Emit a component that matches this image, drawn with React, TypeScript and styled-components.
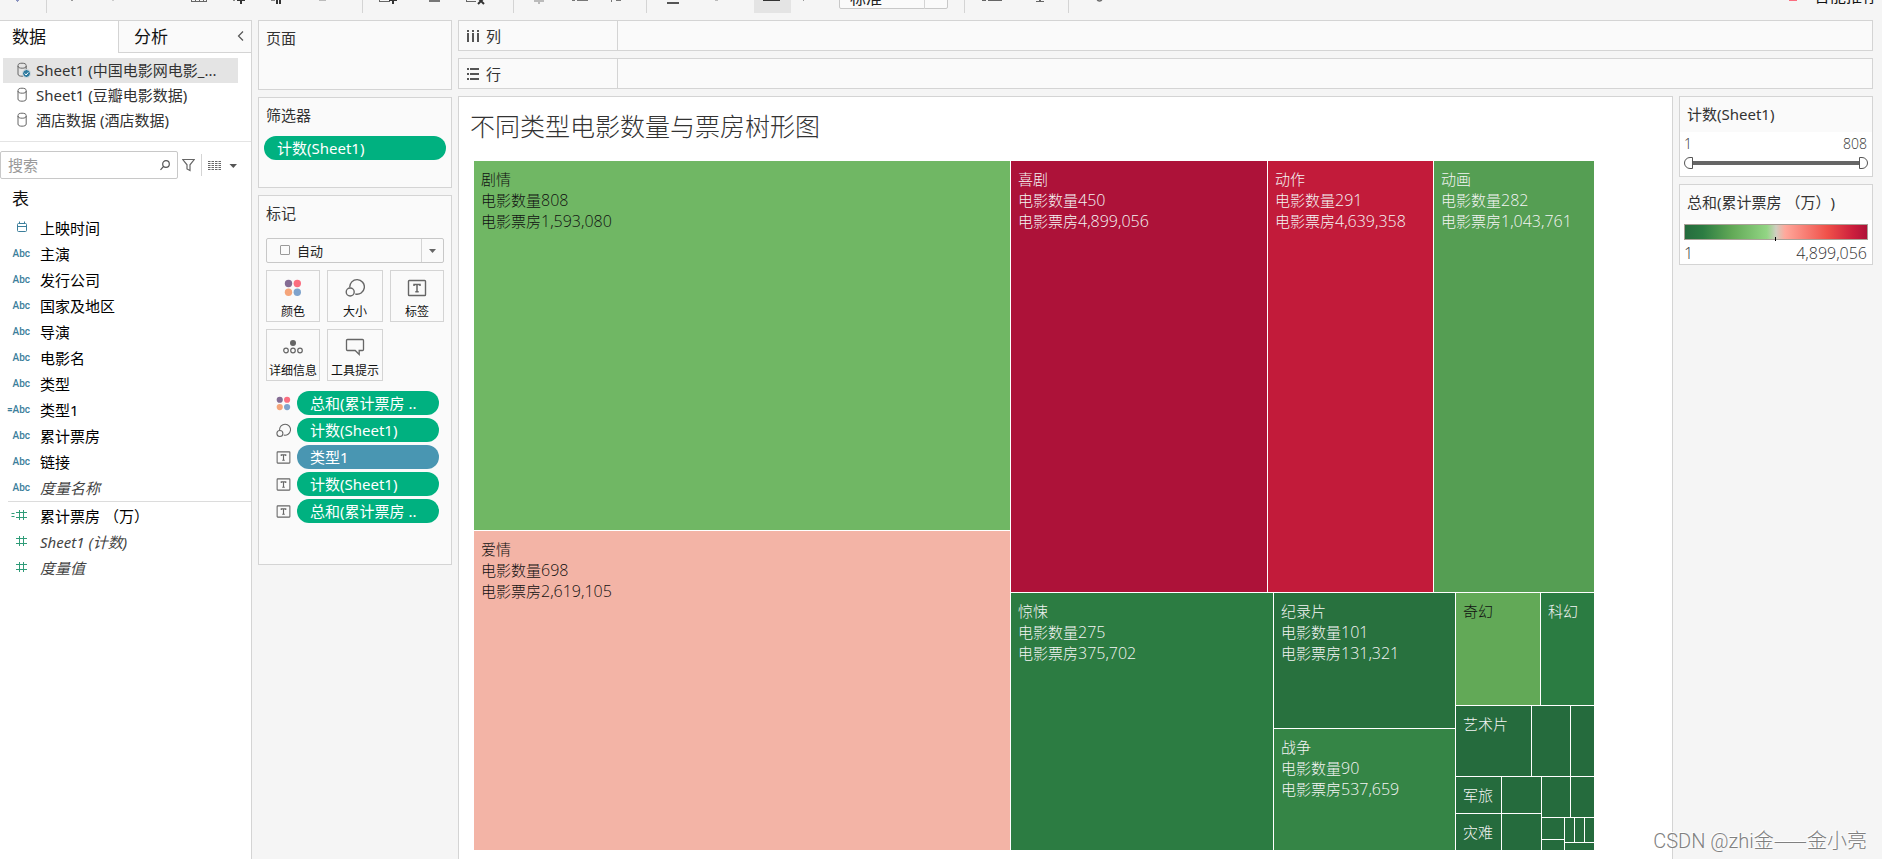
import React from "react";
import styled, { createGlobalStyle } from "styled-components";

const GlobalStyle = createGlobalStyle`
  * { box-sizing: border-box; }
  html, body { margin: 0; padding: 0; }
  body {
    background: #f5f5f5;
    color: #333;
    font-family: "Noto Sans", "Noto Sans CJK SC", sans-serif;
    font-size: 15px;
    text-spacing-trim: space-all;
    overflow: hidden;
  }
  button, input, select { font: inherit; color: inherit; margin: 0; }
  ul { list-style: none; margin: 0; padding: 0; }
  h1, h2 { margin: 0; font-weight: 400; }
  svg { display: block; flex: none; }
`;

const LINE = "#d4d4d4";
const GREEN = "#00b180";
const BLUE = "#4996b2";

const Page = styled.div`
  position: relative;
  height: 100vh;
  display: flex;
  flex-direction: column;
`;

/* ---------- toolbar ---------- */

const Toolbar = styled.header`
  flex: none;
  height: 20px;
  padding-bottom: 7px;
  overflow: hidden;
  display: flex;
  align-items: flex-end;
`;

const ToolGroup = styled.div<{ $width: number; $pad?: number; $last?: boolean }>`
  flex: none;
  width: ${(p) => p.$width}px;
  height: 36px;
  padding-left: ${(p) => p.$pad ?? 4}px;
  border-right: ${(p) => (p.$last ? "none" : `1px solid ${LINE}`)};
  display: flex;
  align-items: flex-end;
`;

const ToolButton = styled.button<{ $width?: number; $active?: boolean }>`
  flex: none;
  width: ${(p) => p.$width ?? 41}px;
  height: 36px;
  padding: 0;
  border: 0;
  background: ${(p) => (p.$active ? "#e4e4e4" : "transparent")};
`;

const ToolSelect = styled.div`
  padding-bottom: 4px;
`;

const Recommend = styled.button`
  margin-left: auto;
  margin-right: 4px;
  padding: 0;
  border: 0;
  background: none;
  height: 36px;
  font-size: 16px;
  line-height: 24px;
  color: #111;
  display: flex;
  align-items: flex-end;
  gap: 9px;
`;

const RecommendText = styled.span`
  padding-bottom: 5px;
`;

function ToolIcon({ w = 41, children }: { w?: number; children?: React.ReactNode }) {
  return (
    <svg width={w} height={36} viewBox={`0 -23 ${w} 36`} shapeRendering="crispEdges">
      {children}
    </svg>
  );
}

/* ---------- select ---------- */

const SelectBox = styled.div<{ $width: number; $arrow: number }>`
  position: relative;
  flex: none;
  width: ${(p) => p.$width}px;
  height: 25px;
  border: 1px solid #c8c8c8;
  border-radius: 2px;
  background: #fafafa;
  display: grid;
  grid-template-columns: 1fr ${(p) => p.$arrow}px;
`;

const Select = styled.select<{ $indent: number; $size: number; $top?: number }>`
  grid-area: 1 / 1 / 2 / 3;
  appearance: none;
  width: 100%;
  border: 0;
  padding: ${(p) => p.$top ?? 0}px 0 0 ${(p) => p.$indent}px;
  background: transparent;
  font-size: ${(p) => p.$size}px;
  color: #222;
`;

const SelectArrow = styled.span`
  grid-area: 1 / 2;
  border-left: 1px solid ${LINE};
  display: flex;
  align-items: center;
  justify-content: center;
  pointer-events: none;
`;

const SelectMark = styled.span`
  position: absolute;
  left: 13px;
  top: 6px;
  width: 10px;
  height: 10px;
  border: 1px solid #999;
  border-radius: 1px;
  pointer-events: none;
`;

const Caret = () => (
  <svg width="7" height="4" viewBox="0 0 7 4">
    <path d="M0 0h7L3.500 4z" fill="#666" />
  </svg>
);

/* ---------- layout ---------- */

const Body = styled.div`
  flex: 1;
  min-height: 0;
  display: flex;
  gap: 6px;
`;

const Side = styled.aside`
  flex: none;
  width: 252px;
  background: #fff;
  border-top: 1px solid ${LINE};
  border-right: 1px solid ${LINE};
  display: flex;
  flex-direction: column;
`;

const Tabs = styled.div`
  display: flex;
  height: 32px;
`;

const Tab = styled.button<{ $active?: boolean; $width?: number }>`
  ${(p) => (p.$width ? `width: ${p.$width}px;` : "flex: 1;")}
  padding: 0 5px 0 ${(p) => (p.$active ? 12 : 15)}px;
  border: 0;
  border-left: ${(p) => (p.$active ? 0 : 1)}px solid ${LINE};
  border-bottom: ${(p) => (p.$active ? 0 : 1)}px solid ${LINE};
  background: ${(p) => (p.$active ? "#fff" : "#fafafa")};
  font-size: 17px;
  line-height: 30px;
  color: #111;
  display: flex;
  align-items: center;
  justify-content: space-between;
`;

const Sources = styled.ul`
  padding: 5px 13px 8px 3px;
  border-bottom: 1px solid #e4e4e4;
`;

const Source = styled.li<{ $active?: boolean }>`
  height: 25px;
  padding: 0 0 2px 14px;
  background: ${(p) => (p.$active ? "#e4e4e4" : "transparent")};
  display: flex;
  align-items: center;
  gap: 5px;
  white-space: nowrap;
`;

const SearchRow = styled.div`
  margin-top: 9px;
  display: flex;
  align-items: center;
`;

const SearchBox = styled.label`
  width: 178px;
  height: 28px;
  padding: 0 7px;
  border: 1px solid #c8c8c8;
  border-radius: 2px;
  display: flex;
  align-items: center;
`;

const SearchInput = styled.input`
  flex: 1;
  min-width: 0;
  padding: 0;
  border: 0;
  outline: 0;
  background: none;
  &::placeholder { color: #999; opacity: 1; }
`;

const IconButton = styled.button<{ $left: number }>`
  padding: 0;
  margin-left: ${(p) => p.$left}px;
  border: 0;
  background: none;
`;

const SearchDivider = styled.span`
  width: 1px;
  height: 22px;
  margin-left: 6px;
  background: ${LINE};
`;

const TableTitle = styled.h2`
  padding: 6px 0 2px 12px;
  font-size: 17px;
  line-height: 28px;
  color: #111;
`;

const Fields = styled.ul<{ $measures?: boolean }>`
  margin-left: ${(p) => (p.$measures ? 8 : 0)}px;
  padding-top: ${(p) => (p.$measures ? 2 : 0)}px;
  border-top: ${(p) => (p.$measures ? 1 : 0)}px solid #dcdcdc;
`;

const Field = styled.li<{ $italic?: boolean; $measures?: boolean }>`
  height: 26px;
  padding-bottom: ${(p) => (p.$measures ? 4 : 2)}px;
  color: ${(p) => (p.$italic ? "#444" : "#000")};
  font-style: ${(p) => (p.$italic ? "italic" : "normal")};
  display: grid;
  grid-template-columns: ${(p) => (p.$measures ? 22 : 30)}px 1fr;
  column-gap: 10px;
  align-items: center;
`;

const FieldType = styled.span`
  justify-self: end;
  color: #3b7e9b;
  font-family: Roboto, sans-serif;
  font-size: 10px;
  font-weight: 500;
  font-style: normal;
`;

const CalendarIconBox = styled.span`
  display: block;
  padding-right: 2px;
`;

const HashBox = styled.span`
  display: block;
  justify-self: end;
  padding-right: 3px;
`;

const Column = styled.div`
  flex: none;
  width: 194px;
  display: flex;
  flex-direction: column;
  gap: 7px;
`;

const Panel = styled.section<{ $height: number }>`
  height: ${(p) => p.$height}px;
  border: 1px solid ${LINE};
  background: #fafafa;
`;

const PanelTitle = styled.h2`
  height: 36px;
  padding-left: 7px;
  font-size: 15px;
  line-height: 34px;
`;

const Pill = styled.button<{ $color: string; $width: number }>`
  width: ${(p) => p.$width}px;
  height: 24px;
  padding: 0 13px;
  border: 0;
  border-radius: 12px;
  background: ${(p) => p.$color};
  color: #fff;
  line-height: 24px;
  text-align: left;
  white-space: nowrap;
`;

const FilterShelf = styled.div`
  padding: 2px 5px;
`;

const MarksBody = styled.div`
  padding: 6px 7px;
`;

const CardGrid = styled.div`
  margin-top: 7px;
  display: grid;
  grid-template-columns: 54px 56px 54px;
  grid-auto-rows: 52px;
  gap: 7px;
`;

const Card = styled.button`
  padding: 6px 0 0;
  border: 1px solid ${LINE};
  background: #fafafa;
  font-size: 12px;
  line-height: 18px;
  color: #111;
  display: flex;
  flex-direction: column;
  align-items: center;
  gap: 4px;
  white-space: nowrap;
`;

const IconSlot = styled.span`
  height: 22px;
  display: flex;
  align-items: center;
`;

const MarkList = styled.ul`
  margin-top: 10px;
  padding-left: 10px;
  display: grid;
  row-gap: 3px;
`;

const MarkItem = styled.li`
  display: flex;
  align-items: center;
  gap: 6px;
`;

const Work = styled.div`
  flex: 1;
  min-width: 0;
  margin-right: 3px;
  display: flex;
  flex-direction: column;
  gap: 7px;
`;

const Shelf = styled.div`
  flex: none;
  height: 31px;
  margin-right: 6px;
  border: 1px solid ${LINE};
  background: #fafafa;
  display: flex;
`;

const ShelfLabel = styled.div`
  width: 159px;
  padding-left: 8px;
  border-right: 1px solid ${LINE};
  display: flex;
  align-items: center;
  gap: 7px;
`;

const Stage = styled.div`
  flex: 1;
  min-height: 0;
  margin-right: 6px;
  display: flex;
  gap: 6px;
`;

const View = styled.main`
  flex: 1;
  min-width: 0;
  border: 1px solid ${LINE};
  border-bottom: 0;
  background: #fff;
  padding: 0 78px 9px 15px;
  display: flex;
  flex-direction: column;
`;

const ViewTitle = styled.h1`
  height: 64px;
  margin-left: -4px;
  padding-top: 10px;
  font-size: 25px;
  line-height: 36px;
  font-family: "Noto Sans CJK SC", sans-serif;
  font-weight: 300;
  color: #333;
`;

/* ---------- treemap ---------- */

const Split = styled.div<{ $dir: "row" | "column"; $size: number }>`
  flex: ${(p) => p.$size} 1 0;
  min-width: 0;
  min-height: 0;
  display: flex;
  flex-direction: ${(p) => p.$dir};
  gap: 1px;
`;

const Tile = styled.div<{ $size: number; $color: string; $dark?: boolean }>`
  flex: ${(p) => p.$size} 1 0;
  min-width: 0;
  min-height: 0;
  overflow: hidden;
  background: ${(p) => p.$color};
  color: ${(p) => (p.$dark ? "#111" : "#f4f4f4")};
`;

const TileText = styled.div`
  padding: 7px 0 0 7px;
  font-family: "Noto Sans CJK SC", sans-serif;
  font-weight: 300;
`;

const TileLine = styled.div`
  height: 21px;
  line-height: 21px;
  white-space: nowrap;
`;

const Num = styled.span<{ $size?: number }>`
  font-family: "Open Sans", "Noto Sans", sans-serif;
  font-weight: 300;
  font-size: ${(p) => p.$size ?? 16}px;
`;

type TileNode = { size: number; color: string; dark?: boolean; lines?: string[] };
type SplitNode = { size: number; dir: "row" | "column"; items: TreeNode[] };
type TreeNode = TileNode | SplitNode;

const D = "#256b3d";
const t = (size: number, color = D, lines?: string[], dark?: boolean): TileNode => ({ size, color, lines, dark });
const row = (size: number, ...items: TreeNode[]): SplitNode => ({ size, dir: "row", items });
const col = (size: number, ...items: TreeNode[]): SplitNode => ({ size, dir: "column", items });

const genre = (name: string, count: string, gross: string) => [name, `电影数量${count}`, `电影票房${gross}`];

const tree = row(
  1,
  col(
    536,
    t(369, "#70b764", genre("剧情", "808", "1,593,080"), true),
    t(319, "#f3b4a6", genre("爱情", "698", "2,619,105"), true)
  ),
  col(
    583,
    row(
      431,
      t(256, "#ad1239", genre("喜剧", "450", "4,899,056")),
      t(165, "#c21b3a", genre("动作", "291", "4,639,358")),
      t(160, "#559e53", genre("动画", "282", "1,043,761"))
    ),
    row(
      257,
      t(262, "#2c7c42", genre("惊悚", "275", "375,702")),
      col(
        181,
        t(135, "#28713e", genre("纪录片", "101", "131,321")),
        t(121, "#358546", genre("战争", "90", "537,659"))
      ),
      col(
        138,
        row(112, t(84, "#62a957", ["奇幻"], true), t(53, "#2b7c42", ["科幻"])),
        row(70, t(75, D, ["艺术片"]), t(38), t(23)),
        row(
          73,
          col(85, row(36, t(45, D, ["军旅"]), t(39)), row(36, t(45, D, ["灾难"]), t(39))),
          col(
            52,
            row(40, t(28), t(23)),
            row(32, col(22, t(21), t(10)), col(29, row(24, t(9), t(9), t(9)), t(7)))
          )
        )
      )
    )
  )
);

function Treemap({ node }: { node: TreeNode }) {
  if ("items" in node) {
    return (
      <Split $dir={node.dir} $size={node.size}>
        {node.items.map((n, i) => (
          <Treemap key={i} node={n} />
        ))}
      </Split>
    );
  }
  return (
    <Tile $size={node.size} $color={node.color} $dark={node.dark}>
      {node.lines && (
        <TileText>
          {node.lines.map((line) => {
            const digits = line.replace(/^[^\d]+/, "");
            return (
              <TileLine key={line}>
                {line.slice(0, line.length - digits.length)}
                {digits && <Num>{digits}</Num>}
              </TileLine>
            );
          })}
        </TileText>
      )}
    </Tile>
  );
}

/* ---------- legends ---------- */

const Legend = styled.section`
  height: 81px;
  border: 1px solid ${LINE};
  background: #fff;
`;

const LegendTitle = styled(PanelTitle)`
  background: #fafafa;
  height: 35px;
  white-space: nowrap;
`;

const Values = styled.div`
  padding: 0 5px 0 4px;
  line-height: 24px;
  display: flex;
  justify-content: space-between;
`;

const RangeBox = styled.div`
  margin: 1px 4px 0;
  display: grid;
  align-items: center;
  background: linear-gradient(#666, #666) center / calc(100% - 8px) 4px no-repeat;
`;

const Range = styled.input<{ $end?: boolean }>`
  grid-area: 1 / 1;
  appearance: none;
  width: 100%;
  height: 12px;
  background: none;
  pointer-events: none;
  &::-webkit-slider-thumb {
    appearance: none;
    box-sizing: border-box;
    pointer-events: auto;
    width: 9px;
    height: 12px;
    border: 1px solid #555;
    background: #fff;
    border-radius: ${(p) => (p.$end ? "0 6px 6px 0" : "6px 0 0 6px")};
  }
`;

const Ramp = styled.svg`
  margin: 4px 4px 0;
  width: calc(100% - 8px);
`;

const Watermark = styled.div`
  position: absolute;
  right: 15px;
  bottom: 4px;
  font-family: Roboto, sans-serif;
  font-weight: 300;
  font-size: 20px;
  line-height: 28px;
  color: #808080;
  text-shadow: -1px -1px 0 #fff;
  white-space: nowrap;
`;

const WatermarkName = styled.span`
  font-family: "Noto Sans CJK SC", sans-serif;
`;

/* ---------- icons ---------- */

const Cylinder = ({ checked }: { checked?: boolean }) => (
  <svg width="14" height="16" viewBox="0 0 14 16" fill="none" stroke="#666">
    <path d="M1 3.500C1 1.900 2.500 1.200 5 1.200s4.200.7 4.200 2.300v8.500c0 1.500-1.700 2.200-4.200 2.200S1 13.500 1 12z" />
    <path d="M1 4c0 1.500 1.600 2.200 4.200 2.200S9.200 5.500 9.200 4" />
    {checked && (
      <>
        <circle cx="9.500" cy="11.500" r="4" fill="#2f7ba0" stroke="#e4e4e4" />
        <path d="M7.700 11.500l1.400 1.500 2.200-2.600" stroke="#fff" />
      </>
    )}
  </svg>
);

const Dots = ({ size }: { size: number }) => (
  <svg width={size} height={size} viewBox="0 0 18 18">
    <circle cx="4.500" cy="4.500" r="3.700" fill="#846c94" />
    <circle cx="13.300" cy="4.500" r="3.700" fill="#fb6e80" />
    <circle cx="4.500" cy="13.300" r="3.700" fill="#f5a57a" />
    <circle cx="13.300" cy="13.300" r="3.700" fill="#7fa3cc" />
  </svg>
);

const SizeIcon = ({ size }: { size: number }) => (
  <svg width={size} height={size} viewBox="0 0 20 20" fill="none" stroke="#666" strokeWidth="1.400">
    <path d="M4.800 9.500A7.300 7.300 0 1 1 10.300 16" />
    <circle cx="5.200" cy="14" r="4" />
  </svg>
);

const TextIcon = ({ size }: { size: number }) => (
  <svg width={size} height={size} viewBox="0 0 20 20" fill="none" stroke="#666">
    <rect x="1.500" y="2.500" width="17" height="15" rx="0.800" strokeWidth="1.400" />
    <path d="M7 8V6.500h6V8M10 6.500v7M8.300 13.700h3.400" strokeWidth="1.500" />
  </svg>
);

const DetailIcon = () => (
  <svg width="20" height="20" viewBox="0 0 20 20" fill="none" stroke="#666" strokeWidth="1.200">
    <circle cx="10" cy="6" r="3" fill="#666" stroke="none" />
    <circle cx="3" cy="13.500" r="2.300" />
    <circle cx="10" cy="13.500" r="2.300" />
    <circle cx="17" cy="13.500" r="2.300" />
  </svg>
);

const TooltipIcon = () => (
  <svg width="20" height="20" viewBox="0 0 20 20" fill="none" stroke="#666" strokeWidth="1.300">
    <path d="M2.500 2.500h15a1 1 0 0 1 1 1v9a1 1 0 0 1-1 1h-3.300v4l-4-4H2.500a1 1 0 0 1-1-1v-9a1 1 0 0 1 1-1z" />
  </svg>
);

const CalendarIcon = () => (
  <svg width="12" height="12" viewBox="0 0 12 12" fill="none" stroke="#3b7e9b">
    <rect x="1.500" y="2.500" width="9" height="8" rx="1" />
    <path d="M1.500 5.500h9M3.500 0.500v2M8.500 0.500v2" />
  </svg>
);

const HashIcon = ({ calc }: { calc?: boolean }) => (
  <svg width="16" height="12" viewBox="0 0 16 12" fill="none" stroke="#2f9c78">
    <path d="M5 3.500h11M5 8.500h11M8.500 1v10M12.500 1v10" />
    {calc && <path d="M0.500 4.500h3M0.500 7.500h3" />}
  </svg>
);

/* ---------- page ---------- */

const dimensions = [
  "主演", "发行公司", "国家及地区", "导演", "电影名", "类型", "类型1", "累计票房", "链接", "度量名称",
];

const marks = [
  { icon: <Dots size={15} />, text: "总和(累计票房 ..", color: GREEN },
  { icon: <SizeIcon size={15} />, text: "计数(Sheet1)", color: GREEN },
  { icon: <TextIcon size={15} />, text: "类型1", color: BLUE },
  { icon: <TextIcon size={15} />, text: "计数(Sheet1)", color: GREEN },
  { icon: <TextIcon size={15} />, text: "总和(累计票房 ..", color: GREEN },
];

export default function App() {
  return (
    <Page>
      <GlobalStyle />
      <Toolbar>
        <ToolGroup $width={47} $pad={0}>
          <ToolButton aria-label="Home"><ToolIcon><path d="M15 -1h5l-2.500 3z" fill="#8a93c0" /></ToolIcon></ToolButton>
        </ToolGroup>
        <ToolGroup $width={316} $pad={5}>
          <ToolButton aria-label="Undo"><ToolIcon><path d="M19 -1h2v2h-2z" fill="#999" /></ToolIcon></ToolButton>
          <ToolButton aria-label="Redo"><ToolIcon><path d="M19 -1h2v2h-2z" fill="#ccc" /></ToolIcon></ToolButton>
          <ToolButton aria-label="Save"><ToolIcon /></ToolButton>
          <ToolButton aria-label="New data source">
            <ToolIcon><path d="M16.500 -2v3.500h15V-2M20.500 -1v2M24.500 -1v2M28.500 -1v2" fill="none" stroke="#666" /></ToolIcon>
          </ToolButton>
          <ToolButton aria-label="Add">
            <ToolIcon>
              <path d="M24 -3h2v7h-2zM21 -1h8v2h-8z" fill="#333" />
              <path d="M17 0h2v1h-2z" fill="#888" />
            </ToolIcon>
          </ToolButton>
          <ToolButton aria-label="Pause updates">
            <ToolIcon>
              <path d="M19 -3h2v7h-2zM22 -3h2v7h-2z" fill="#333" />
              <path d="M14 0h4v1h-4z" fill="#888" />
            </ToolIcon>
          </ToolButton>
          <ToolButton aria-label="Run update"><ToolIcon><path d="M21 -1h7v2h-7z" fill="#bbb" /></ToolIcon></ToolButton>
        </ToolGroup>
        <ToolGroup $width={151} $pad={2}>
          <ToolButton aria-label="New worksheet">
            <ToolIcon>
              <path d="M14.500 -2v3.500h10" fill="none" stroke="#666" />
              <path d="M27 -3h2v7h-2zM24 -1h8v2h-8z" fill="#333" />
            </ToolIcon>
          </ToolButton>
          <ToolButton $width={45} aria-label="Duplicate"><ToolIcon w={45}><path d="M23 0h11v2h-11z" fill="#777" /></ToolIcon></ToolButton>
          <ToolButton $width={45} aria-label="Clear">
            <ToolIcon w={45}>
              <path d="M15.500 -2v3.500h9" fill="none" stroke="#666" />
              <path d="M27 4l6-6M33 4l-6-6" fill="none" stroke="#333" strokeWidth="2" shapeRendering="auto" />
            </ToolIcon>
          </ToolButton>
        </ToolGroup>
        <ToolGroup $width={133}>
          <ToolButton aria-label="Swap"><ToolIcon><path d="M20 -3h2v7h-2zM16 0h10v2h-10z" fill="#bbb" /></ToolIcon></ToolButton>
          <ToolButton aria-label="Sort ascending"><ToolIcon><path d="M13 0h3v1h-3zM18 0h11v1h-11z" fill="#777" /></ToolIcon></ToolButton>
          <ToolButton aria-label="Sort descending"><ToolIcon><path d="M11 -1h1v3h-1zM16 0h5v1h-5z" fill="#777" /></ToolIcon></ToolButton>
        </ToolGroup>
        <ToolGroup $width={318} $pad={6}>
          <ToolButton aria-label="Highlight"><ToolIcon><path d="M14 2h12v2h-12zM15 -1h2v1h-2zM22 -1h3v1h-3z" fill="#555" /></ToolIcon></ToolButton>
          <ToolButton $width={60} aria-label="Group"><ToolIcon w={60}><path d="M21 -1h3v2h-3z" fill="#bbb" /></ToolIcon></ToolButton>
          <ToolButton $width={37} $active aria-label="Show labels"><ToolIcon w={37}><path d="M9 -1h17v2h-17z" fill="#333" /></ToolIcon></ToolButton>
          <ToolButton $width={48} aria-label="Fix axes"><ToolIcon w={48}><path d="M12 -1h1v2h-1z" fill="#999" /></ToolIcon></ToolButton>
          <ToolSelect>
            <SelectBox $width={109} $arrow={23}>
              <Select $indent={10} $size={16} $top={2} aria-label="Fit"><option>标准</option></Select>
              <SelectArrow />
            </SelectBox>
          </ToolSelect>
        </ToolGroup>
        <ToolGroup $width={104}>
          <ToolButton $width={50} aria-label="Show cards"><ToolIcon w={50}><path d="M13 -1h4v2h-4zM19 -1h14v2h-14z" fill="#666" /></ToolIcon></ToolButton>
          <ToolButton aria-label="Presentation"><ToolIcon><path d="M20 -2h2v3h-2zM17 1h8v1h-8z" fill="#666" /></ToolIcon></ToolButton>
        </ToolGroup>
        <ToolGroup $width={60} $last>
          <ToolButton $width={56} aria-label="Share">
            <svg width={56} height={36} viewBox="0 -23 56 36"><path d="M24 -2c0 4 5 4 5 0" fill="none" stroke="#666" strokeWidth="1.500" /></svg>
          </ToolButton>
        </ToolGroup>
        <Recommend>
          <ToolIcon w={17}><path d="M1 -1h8v2h-8z" fill="#fb6e80" /></ToolIcon>
          <RecommendText>智能推荐</RecommendText>
        </Recommend>
      </Toolbar>

      <Body>
        <Side>
          <Tabs>
            <Tab $active $width={118}>数据</Tab>
            <Tab>
              分析
              <svg width="10" height="12" viewBox="0 0 10 12" fill="none" stroke="#555" strokeWidth="1.200">
                <path d="M7 0.500L2.500 5 7 9.500" />
              </svg>
            </Tab>
          </Tabs>
          <Sources>
            <Source $active><Cylinder checked />Sheet1 (中国电影网电影_...</Source>
            <Source><Cylinder />Sheet1 (豆瓣电影数据)</Source>
            <Source><Cylinder />酒店数据 (酒店数据)</Source>
          </Sources>
          <SearchRow>
            <SearchBox>
              <SearchInput placeholder="搜索" aria-label="搜索" />
              <svg width="10" height="11" viewBox="0 0 10 11" fill="none" stroke="#555" strokeWidth="1.200">
                <circle cx="6" cy="4" r="3.300" />
                <path d="M3.600 6.400L0.500 9.800" />
              </svg>
            </SearchBox>
            <IconButton $left={4} aria-label="Filter">
              <svg width="13" height="14" viewBox="0 0 13 14" fill="none" stroke="#666" strokeWidth="1.200">
                <path d="M0.800 1.500h11.400L8 6.800v5.700L5 11V6.800z" />
              </svg>
            </IconButton>
            <SearchDivider />
            <IconButton $left={6} aria-label="View as">
              <svg width="29" height="11" viewBox="0 0 29 11">
                <path d="M0 1.500h13M0 3.500h13M0 5.500h13M0 7.500h13M0 9.500h13" stroke="#666" strokeDasharray="2.500 1" />
                <path d="M21.500 4h7.500l-3.700 4z" fill="#555" />
              </svg>
            </IconButton>
          </SearchRow>
          <TableTitle>表</TableTitle>
          <Fields>
            <Field>
              <FieldType><CalendarIconBox><CalendarIcon /></CalendarIconBox></FieldType>
              上映时间
            </Field>
            {dimensions.map((d) => (
              <Field key={d} $italic={d === "度量名称"}>
                <FieldType>{d === "类型1" ? "=Abc" : "Abc"}</FieldType>
                {d}
              </Field>
            ))}
          </Fields>
          <Fields $measures>
            <Field $measures>
              <HashBox><HashIcon calc /></HashBox>累计票房 （万）
            </Field>
            <Field $measures $italic>
              <HashBox><HashIcon /></HashBox>Sheet1 (计数)
            </Field>
            <Field $measures $italic>
              <HashBox><HashIcon /></HashBox>度量值
            </Field>
          </Fields>
        </Side>

        <Column>
          <Panel $height={70}><PanelTitle>页面</PanelTitle></Panel>
          <Panel $height={91}>
            <PanelTitle>筛选器</PanelTitle>
            <FilterShelf><Pill $color={GREEN} $width={182}>计数(Sheet1)</Pill></FilterShelf>
          </Panel>
          <Panel $height={370}>
            <PanelTitle>标记</PanelTitle>
            <MarksBody>
              <SelectBox $width={178} $arrow={22}>
                <SelectMark />
                <Select $indent={30} $size={13} aria-label="标记类型"><option>自动</option></Select>
                <SelectArrow><Caret /></SelectArrow>
              </SelectBox>
              <CardGrid>
                <Card><IconSlot><Dots size={18} /></IconSlot>颜色</Card>
                <Card><IconSlot><SizeIcon size={20} /></IconSlot>大小</Card>
                <Card><IconSlot><TextIcon size={20} /></IconSlot>标签</Card>
                <Card><IconSlot><DetailIcon /></IconSlot>详细信息</Card>
                <Card><IconSlot><TooltipIcon /></IconSlot>工具提示</Card>
              </CardGrid>
              <MarkList>
                {marks.map((m, i) => (
                  <MarkItem key={i}>
                    {m.icon}
                    <Pill $color={m.color} $width={142}>{m.text}</Pill>
                  </MarkItem>
                ))}
              </MarkList>
            </MarksBody>
          </Panel>
        </Column>

        <Work>
          <Shelf>
            <ShelfLabel>
              <svg width="12" height="12" viewBox="0 0 12 12" fill="#555">
                <path d="M0 0h2v2H0zM5 0h2v2H5zM10 0h2v2h-2zM0 3h2v9H0zM5 3h2v9H5zM10 3h2v9h-2z" />
              </svg>
              列
            </ShelfLabel>
          </Shelf>
          <Shelf>
            <ShelfLabel>
              <svg width="12" height="12" viewBox="0 0 12 12" fill="#555">
                <path d="M0 0h2v2H0zM0 5h2v2H0zM0 10h2v2H0zM3 0h9v2H3zM3 5h9v2H3zM3 10h9v2H3z" />
              </svg>
              行
            </ShelfLabel>
          </Shelf>
          <Stage>
            <View>
              <ViewTitle>不同类型电影数量与票房树形图</ViewTitle>
              <Treemap node={tree} />
            </View>
            <Column>
              <Legend>
                <LegendTitle>计数(Sheet1)</LegendTitle>
                <Values><Num $size={14}>1</Num><Num $size={14}>808</Num></Values>
                <RangeBox>
                  <Range type="range" min={1} max={808} defaultValue={1} aria-label="最小值" />
                  <Range type="range" min={1} max={808} defaultValue={808} $end aria-label="最大值" />
                </RangeBox>
              </Legend>
              <Legend>
                <LegendTitle>总和(累计票房 （万）)</LegendTitle>
                <Ramp height="17" viewBox="0 0 184 17" preserveAspectRatio="none">
                  <defs>
                    <linearGradient id="ramp">
                      <stop offset="0" stopColor="#256b3d" />
                      <stop offset="0.1" stopColor="#2c7c42" />
                      <stop offset="0.26" stopColor="#62a957" />
                      <stop offset="0.45" stopColor="#92d584" />
                      <stop offset="0.5" stopColor="#cfcfc0" />
                      <stop offset="0.55" stopColor="#ffa89b" />
                      <stop offset="0.78" stopColor="#f0514a" />
                      <stop offset="0.92" stopColor="#cc1f3d" />
                      <stop offset="1" stopColor="#ad1239" />
                    </linearGradient>
                  </defs>
                  <rect x="0.500" y="0.500" width="183" height="15" fill="url(#ramp)" stroke="#aaa198" />
                  <path d="M91.500 13v4" stroke="#000" />
                </Ramp>
                <Values><Num>1</Num><Num>4,899,056</Num></Values>
              </Legend>
            </Column>
          </Stage>
        </Work>
      </Body>
      <Watermark>CSDN @zhi<WatermarkName>金——金小亮</WatermarkName></Watermark>
    </Page>
  );
}
